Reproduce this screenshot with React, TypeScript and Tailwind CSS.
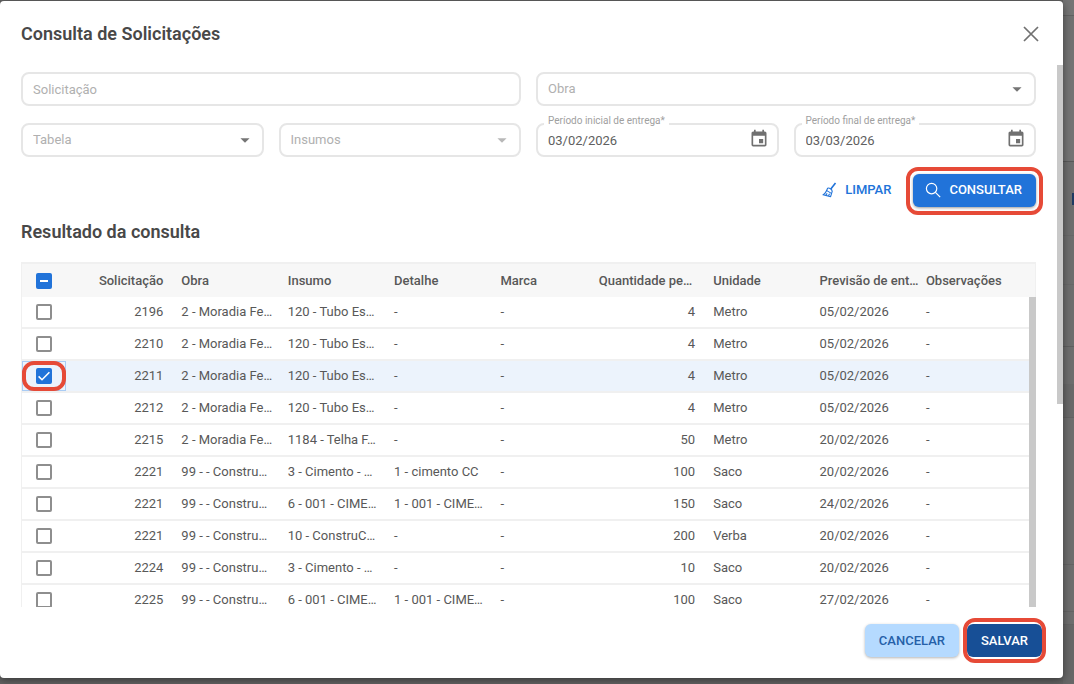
import type { ReactNode } from 'react';
import { MdArrowDropDown, MdEvent } from 'react-icons/md';

const rows = [
  { id: '2196', work: '2 - Moradia Fe…', item: '120 - Tubo Es…', detail: '-', qty: 4, unit: 'Metro', date: '05/02/2026' },
  { id: '2210', work: '2 - Moradia Fe…', item: '120 - Tubo Es…', detail: '-', qty: 4, unit: 'Metro', date: '05/02/2026' },
  { id: '2211', work: '2 - Moradia Fe…', item: '120 - Tubo Es…', detail: '-', qty: 4, unit: 'Metro', date: '05/02/2026', selected: true },
  { id: '2212', work: '2 - Moradia Fe…', item: '120 - Tubo Es…', detail: '-', qty: 4, unit: 'Metro', date: '05/02/2026' },
  { id: '2215', work: '2 - Moradia Fe…', item: '1184 - Telha F…', detail: '-', qty: 50, unit: 'Metro', date: '20/02/2026' },
  { id: '2221', work: '99 - - Constru…', item: '3 - Cimento - …', detail: '1 - cimento CC', qty: 100, unit: 'Saco', date: '20/02/2026' },
  { id: '2221', work: '99 - - Constru…', item: '6 - 001 - CIME…', detail: '1 - 001 - CIME…', qty: 150, unit: 'Saco', date: '24/02/2026' },
  { id: '2221', work: '99 - - Constru…', item: '10 - ConstruC…', detail: '-', qty: 200, unit: 'Verba', date: '20/02/2026' },
  { id: '2224', work: '99 - - Constru…', item: '3 - Cimento - …', detail: '-', qty: 10, unit: 'Saco', date: '20/02/2026' },
  { id: '2225', work: '99 - - Constru…', item: '6 - 001 - CIME…', detail: '1 - 001 - CIME…', qty: 100, unit: 'Saco', date: '27/02/2026' },
];

function SelectField({ id, label, disabled, className = '' }: { id: string; label: string; disabled?: boolean; className?: string }) {
  return (
    <div className={`relative ${className}`}>
      <select
        id={id}
        aria-label={label}
        defaultValue=""
        disabled={disabled}
        className="h-[34px] w-full appearance-none rounded-lg border-2 border-[#e6e6e6] bg-white px-2.5 text-[13px] text-[#b0b0b0] disabled:opacity-100"
      >
        <option value="">{label}</option>
      </select>
      <MdArrowDropDown
        className={`pointer-events-none absolute right-2 top-1.5 h-[22px] w-[22px] ${disabled ? 'text-[#b8b8b8]' : 'text-[#757575]'}`}
      />
    </div>
  );
}

function DateField({ id, label, value }: { id: string; label: string; value: string }) {
  return (
    <div className="relative">
      <input
        id={id}
        type="text"
        defaultValue={value}
        className="h-[34px] w-full rounded-lg border-2 border-[#e6e6e6] bg-white px-2.5 text-[13px] text-[#606060]"
      />
      <label htmlFor={id} className="absolute -top-2.5 left-2 bg-white px-1 text-[10px] leading-4 text-[#a0a0a0]">
        {label}
      </label>
      <button type="button" aria-label={`Abrir calendário: ${label}`} className="absolute right-2.5 top-1.5 text-[#707070]">
        <MdEvent className="h-5 w-5" />
      </button>
    </div>
  );
}

function RowCheckbox({ label, checked }: { label: string; checked?: boolean }) {
  return (
    <span className="relative mx-auto block h-4 w-4">
      <input
        type="checkbox"
        aria-label={label}
        defaultChecked={checked}
        className="block h-4 w-4 appearance-none rounded-[2px] border-2 border-[#8e8e8e] bg-white checked:border-[#2173d9] checked:bg-[#2173d9]"
      />
      {checked && (
        <svg viewBox="0 0 16 16" className="pointer-events-none absolute inset-0 h-4 w-4" fill="none" stroke="white" strokeWidth="1.6">
          <path d="M2.6 8.4 6 11.7l7.4-7.4" />
        </svg>
      )}
    </span>
  );
}

function HeadCell({ children, className = '' }: { children: ReactNode; className?: string }) {
  return (
    <th scope="col" className={`whitespace-nowrap px-[9px] text-left font-medium ${className}`}>
      {children}
    </th>
  );
}

function Cell({ children, className = '' }: { children: ReactNode; className?: string }) {
  return <td className={`whitespace-nowrap border-b-2 border-[#f0f0f0] px-[9px] ${className}`}>{children}</td>;
}

// Sliver of the dimmed page that stays visible beside the dialog
function Backdrop() {
  return (
    <div aria-hidden="true" className="flex w-[11px] shrink-0 flex-col bg-[#6e6e6e]">
      <div className="h-4 border-b border-[#626262] bg-[#757575]" />
      <div className="h-[34px] bg-[#717171]" />
      <div className="h-[112px] border-b border-[#595959] bg-[#747474]" />
      <div className="flex h-[74px] items-center justify-end border-b border-[#686868]">
        <div className="h-3 w-0.5 bg-[#1f3a63]" />
      </div>
      <div className="h-[49px] border-b border-[#686868]" />
      <div className="h-[62px] border-b border-[#5f5f5f]" />
      <div className="h-[37px]" />
      <div className="h-[34px] border-b border-[#626262] bg-[#696969]" />
      <div className="h-[147px] border-b border-[#646464]" />
      <div className="h-[47px] border-b border-[#646464]" />
      <div className="h-[13px] border-b border-[#646464]" />
      <div className="flex-1 bg-[#676767]" />
    </div>
  );
}

export default function App() {
  return (
    <div className="flex h-screen overflow-hidden bg-[#636363] font-[Roboto,sans-serif] text-[#585858]">
      <div
        role="dialog"
        aria-labelledby="dialog-title"
        className="relative z-10 mb-1.5 mt-px flex min-w-0 flex-1 flex-col rounded bg-white shadow-[0_2px_8px_rgba(0,0,0,0.45)]"
      >
        <header className="flex h-16 shrink-0 items-center justify-between pl-[21px] pr-6 pt-0.5">
          <h1 id="dialog-title" className="text-lg font-semibold text-[#484848]">Consulta de Solicitações</h1>
          <button type="button" aria-label="Fechar">
            <svg viewBox="0 0 16 16" className="h-4 w-4" fill="none" stroke="#707070" strokeWidth="1.7">
              <path d="M1 1l14 14M15 1 1 15" />
            </svg>
          </button>
        </header>

        <div className="flex min-h-0 flex-1">
          <div className="min-w-0 flex-1 overflow-hidden px-[21px] pt-[7px]">
            <form className="grid grid-cols-4 gap-x-[15px] gap-y-[17px]">
              <input
                type="text"
                aria-label="Solicitação"
                placeholder="Solicitação"
                className="col-span-2 h-[34px] rounded-lg border-2 border-[#e6e6e6] px-2.5 text-[13px] placeholder:text-[#b0b0b0]"
              />
              <SelectField id="obra" label="Obra" className="col-span-2" />
              <SelectField id="tabela" label="Tabela" />
              <SelectField id="insumos" label="Insumos" disabled />
              <DateField id="inicio" label="Período inicial de entrega*" value="03/02/2026" />
              <DateField id="fim" label="Período final de entrega*" value="03/03/2026" />
            </form>

            <div className="mt-[17px] flex items-center justify-end gap-[22px]">
              <button type="button" className="flex items-center gap-2 pb-0.5 text-[13px] font-medium text-[#2173d9]">
                <svg viewBox="0 0 16 16" className="h-4 w-4" fill="none" stroke="currentColor" strokeWidth="1.1" strokeLinejoin="round">
                  <path d="M14.500 1 9.800 7" strokeWidth="1.6" />
                  <path d="M6.600 6.200c1.800-.6 4.400 1.200 4.600 3.200L9.600 14.600 2 12.800c2-.8 3.400-3.400 4.600-6.600Z" />
                  <path d="m5.400 8.400 5.400 3.200M4.800 13.200l1.400-1.800M7.400 13.800l1.200-2" />
                </svg>
                LIMPAR
              </button>
              <div className="relative">
                <button
                  type="button"
                  className="flex h-[33px] items-center gap-2 rounded-md bg-[#2173d9] pb-0.5 pl-3 pr-3.5 text-[13px] font-medium text-white shadow-[0_1px_3px_rgba(0,0,0,0.4)]"
                >
                  <svg viewBox="0 0 16 16" className="h-4 w-4" fill="none" stroke="currentColor" strokeWidth="1.2">
                    <circle cx="6.600" cy="6.600" r="5.200" />
                    <path d="m10.400 10.400 4.800 4.800" />
                  </svg>
                  CONSULTAR
                </button>
                <span className="pointer-events-none absolute -inset-x-[7px] -bottom-2 -top-[7px] rounded-xl border-4 border-[#e64a37]" />
              </div>
            </div>

            <h2 className="mb-[18px] mt-[13px] text-lg font-semibold leading-6 text-[#484848]">Resultado da consulta</h2>

            <div className="relative border-x border-t-2 border-[#f0f0f0]">
              <table className="w-full table-fixed border-separate border-spacing-0 text-[13px]">
                <colgroup>
                  <col className="w-11" />
                  <col className="w-[10.5%]" />
                  <col className="w-[10.5%]" />
                  <col className="w-[10.5%]" />
                  <col className="w-[10.5%]" />
                  <col className="w-[10.5%]" />
                  <col className="w-[10.5%]" />
                  <col className="w-[10.5%]" />
                  <col className="w-[10.5%]" />
                  <col />
                </colgroup>
                <thead>
                  <tr className="h-[33px] bg-[#f7f7f7]">
                    <th scope="col">
                      <span className="relative mx-auto block h-4 w-4">
                        <input
                          type="checkbox"
                          aria-label="Selecionar todas"
                          className="block h-4 w-4 appearance-none rounded-[2px] bg-[#2173d9]"
                        />
                        <span className="pointer-events-none absolute inset-x-1 top-[7px] h-0.5 bg-white" />
                      </span>
                    </th>
                    <HeadCell className="text-right">Solicitação</HeadCell>
                    <HeadCell>Obra</HeadCell>
                    <HeadCell>Insumo</HeadCell>
                    <HeadCell>Detalhe</HeadCell>
                    <HeadCell>Marca</HeadCell>
                    <HeadCell className="pl-px pr-0">Quantidade pe…</HeadCell>
                    <HeadCell>Unidade</HeadCell>
                    <HeadCell>Previsão de ent…</HeadCell>
                    <HeadCell>Observações</HeadCell>
                  </tr>
                </thead>
                <tbody>
                  {rows.map((row, index) => (
                    <tr key={index} className={row.selected ? 'h-8 bg-[#ecf3fc]' : 'h-8'}>
                      <td className="relative border-b-2 border-[#f0f0f0]">
                        <RowCheckbox label={`Selecionar ${row.id}`} checked={row.selected} />
                        {row.selected && (
                          <span className="pointer-events-none absolute inset-0 border border-[#a9ccf5]">
                            <span className="absolute -inset-px rounded-xl border-4 border-[#e64a37]" />
                          </span>
                        )}
                      </td>
                      <Cell className="text-right">{row.id}</Cell>
                      <Cell>{row.work}</Cell>
                      <Cell>{row.item}</Cell>
                      <Cell>{row.detail}</Cell>
                      <Cell>-</Cell>
                      <Cell className="text-right">{row.qty}</Cell>
                      <Cell>{row.unit}</Cell>
                      <Cell>{row.date}</Cell>
                      <Cell>-</Cell>
                    </tr>
                  ))}
                </tbody>
              </table>
              <div className="absolute -right-px bottom-0 top-[33px] w-[7px] bg-[#c9c9c9]" />
            </div>
          </div>
          <div className="w-1.5 shrink-0">
            <div className="h-[62.5%] bg-[#c9c9c9]" />
          </div>
        </div>

        <footer className="flex h-[71px] shrink-0 items-start justify-end gap-2 pr-[21px] pt-[17px]">
          <button
            type="button"
            className="h-[33px] rounded-md bg-[#b5daff] px-3.5 text-[13px] font-medium text-[#2560a8] shadow-[0_1px_3px_rgba(0,0,0,0.3)]"
          >
            CANCELAR
          </button>
          <div className="relative">
            <button type="button" className="block h-[33px] rounded-md bg-[#174f96] px-3.5 text-[13px] font-medium text-white">
              SALVAR
            </button>
            <span className="pointer-events-none absolute -inset-x-1 -inset-y-1.5 rounded-xl border-4 border-[#e64a37]" />
          </div>
        </footer>
      </div>
      <Backdrop />
    </div>
  );
}
